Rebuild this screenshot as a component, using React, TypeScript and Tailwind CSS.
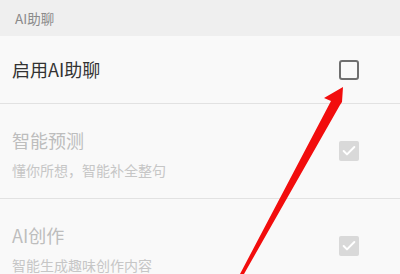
import { Check } from "lucide-react";

function CheckBox({ checked }: { checked: boolean }) {
    if (checked) {
        return (
            <div className="w-5 h-5 rounded-[2px] bg-[#d9d9d9] flex items-center justify-center shrink-0">
                <Check className="w-4 h-4 text-white" strokeWidth={3} />
            </div>
        );
    }
    return <div className="w-5 h-5 rounded-[3px] border-2 border-[#6f6f6f] shrink-0" />;
}

const rows = [
    { title: "智能预测", desc: "懂你所想，智能补全整句" },
    { title: "AI创作", desc: "智能生成趣味创作内容" },
];

export default function App() {
    return (
        <div
            className="relative w-[400px] h-[274px] overflow-hidden bg-[#f9f9f9]"
            style={{ fontFamily: '"Noto Sans CJK SC", "Noto Sans", sans-serif' }}
        >
            <div className="h-9 bg-[#efefef] flex items-center pl-[15px] text-[13.5px] text-[#8a8a8a]">
                AI助聊
            </div>

            <div className="h-[68px] flex items-center justify-between pl-3 pr-[41px] border-b border-[#e2e2e2]">
                <span className="text-[18px] text-[#333333]">启用AI助聊</span>
                <CheckBox checked={false} />
            </div>

            {rows.map((r) => (
                <div
                    key={r.title}
                    className="h-[95px] flex items-center justify-between pl-3 pr-[41px] border-b border-[#e2e2e2]"
                >
                    <div className="flex flex-col gap-2 pt-[6px]">
                        <span className="text-[18px] leading-6 text-[#bdbdbd]">{r.title}</span>
                        <span className="text-[14px] leading-5 text-[#c6c6c6]">{r.desc}</span>
                    </div>
                    <CheckBox checked />
                </div>
            ))}

            {/* red annotation arrow */}
            <svg className="absolute inset-0 pointer-events-none" width="400" height="274" viewBox="0 0 400 274">
                <polygon
                    points="343,87 342,102 340,105 244,274 240,274 331,101 324,98"
                    fill="#f20d0d"
                />
            </svg>
        </div>
    );
}
